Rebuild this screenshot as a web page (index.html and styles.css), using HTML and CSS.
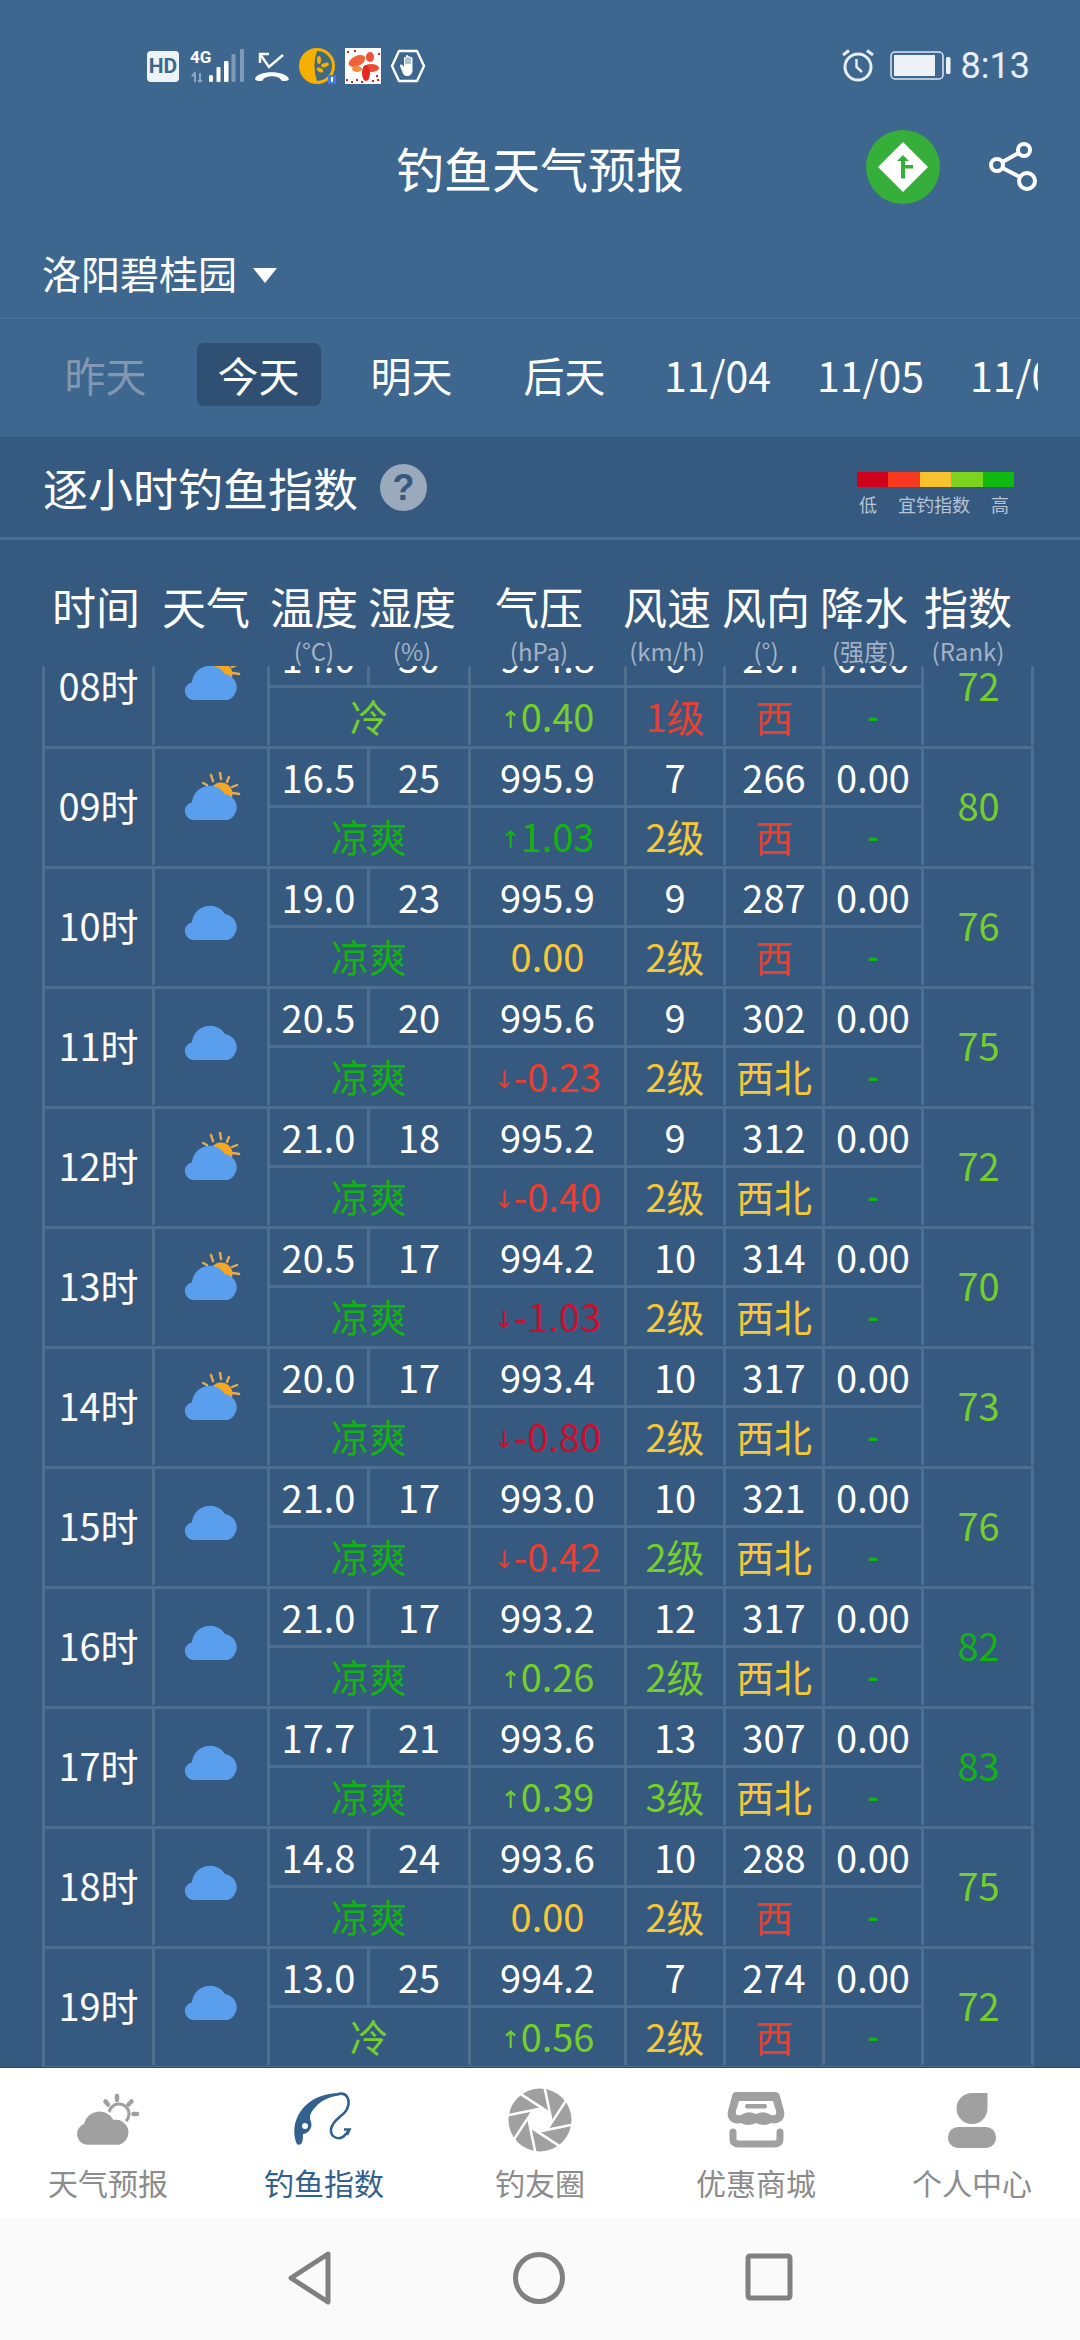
FILE: index.html
```html
<!DOCTYPE html>
<html lang="zh-CN">
<head>
<meta charset="UTF-8"/>
<meta name="viewport" content="width=device-width, initial-scale=1"/>
<title>钓鱼天气预报</title>
<link rel="stylesheet" href="styles.css">
</head>
<body>
<svg class="defs" width="0" height="0" aria-hidden="true">
  <defs>
    <symbol id="cloud" viewBox="0 0 56 48">
      <path fill="#5a9fee" d="M9 48A9 9 0 0 1 7 30.2A18 18 0 0 1 40 22A13.5 13.5 0 0 1 43 48Z"/>
    </symbol>
    <symbol id="cloud-sun" viewBox="0 0 56 48">
      <g stroke="#e3ac52" stroke-width="2.4" stroke-linecap="round">
        <path d="M18 11L22 13M26 3L28 9M35 1L36 7M44 5L42 10M52 13L47 15M54 22L48 21"/>
      </g>
      <circle cx="36" cy="22" r="11.5" fill="#f5a623"/>
      <path fill="#5a9fee" d="M9 48A9 9 0 0 1 7 30.2A18 18 0 0 1 40 22A13.5 13.5 0 0 1 43 48Z"/>
    </symbol>
  </defs>
</svg>

<header class="top">
  <div class="status">
    <div class="status-left">
      <span class="hd">HD</span>
      <svg class="ic-signal" width="55" height="34" viewBox="0 0 55 34">
        <text x="0" y="14" class="four-g">4G</text>
        <path fill="#8ca6c0" d="M4 33V24H6V33ZM1 27L5 22L6 24L3 28ZM9 24H11V31H13L10 34L7 31H9Z"/>
        <rect x="19" y="26" width="4" height="7" rx="1.5" fill="#fff"/>
        <rect x="26.5" y="18" width="4" height="15" rx="1" fill="#fff"/>
        <rect x="34" y="12" width="4.5" height="21" rx="1" fill="#fff"/>
        <rect x="41.5" y="5" width="4" height="28" rx="1" fill="#7f9ab6"/>
        <rect x="50" y="0" width="4" height="33" rx="1" fill="#7f9ab6"/>
      </svg>
      <svg width="36" height="34" viewBox="0 0 36 34">
        <path d="M6 14V5H15M6 5L15 18L29 6" fill="none" stroke="#fff" stroke-width="2.4"/>
        <path fill="#fff" d="M1 30C3 21 32 21 35 30C35 32 28 33 27 31C25 26 11 26 9 31C8 33 1 32 1 30Z"/>
      </svg>
      <svg width="37" height="38" viewBox="0 0 37 38">
        <circle cx="18" cy="19" r="18" fill="#f5b000"/>
        <path fill="#3f6a80" d="M18 4A15 15 0 0 1 18 34Q13 19 18 4Z"/>
        <ellipse cx="20" cy="13" rx="2" ry="4" fill="#f5b000"/>
        <ellipse cx="26" cy="18" rx="4" ry="2" fill="#f5b000" transform="rotate(-20 26 18)"/>
        <ellipse cx="21" cy="23" rx="3.5" ry="2" fill="#f5b000" transform="rotate(30 21 23)"/>
        <rect x="29" y="28" width="8" height="9" fill="#3f7be0"/>
        <rect x="32" y="30" width="2" height="5" fill="#fff"/>
      </svg>
      <svg width="36" height="36" viewBox="0 0 36 36">
        <rect width="36" height="36" fill="#fff"/>
        <ellipse cx="12" cy="13" rx="9" ry="5" fill="#f0623a" transform="rotate(-25 12 13)"/>
        <ellipse cx="25" cy="9" rx="4" ry="5" fill="#f0503a"/>
        <ellipse cx="26" cy="20" rx="8" ry="4" fill="#ee4c32"/>
        <ellipse cx="21" cy="25" rx="4" ry="8" fill="#e32a22"/>
        <ellipse cx="12" cy="21" rx="5" ry="3" fill="#f58a3a"/>
        <path d="M1 31h2v2h-2zM6 33h2v2h-2zM11 31h2v2h-2zM16 33h2v2h-2zM27 32h2v2h-2zM32 31h2v2h-2zM33 5h2v2h-2zM2 3h2v2h-2zM9 2h2v2h-2zM31 27h2v2h-2z" fill="#d8202a"/>
      </svg>
      <svg width="36" height="34" viewBox="0 0 36 34">
        <path d="M9 2H27L34 17L27 32H9L2 17Z" fill="none" stroke="#fff" stroke-width="2.4" stroke-linejoin="round"/>
        <path fill="#fff" d="M10 17C10 15 12 15 14 18V9C14 7.500 16 7.500 16 9V7C16 5.500 18 5.500 18 7V8C18 6.500 20 6.500 20 8V9C20 7.500 22.500 7.500 22.500 9V21C22.500 25 20 27 17 27C14 27 13 25 12 22Z"/>
        <path d="M16 9V15M18 8V15M20 9V15" stroke="#3e678f" stroke-width="0.8"/>
      </svg>
    </div>
    <div class="status-right">
      <svg width="34" height="34" viewBox="0 0 34 34">
        <circle cx="17" cy="18" r="13" fill="none" stroke="#e8eef5" stroke-width="3"/>
        <path d="M15.500 10V18L21 23" fill="none" stroke="#e8eef5" stroke-width="2.400"/>
        <path d="M2 6L8 1.500M32 6L26 1.500" stroke="#e8eef5" stroke-width="3"/>
      </svg>
      <svg class="ic-battery" width="61" height="30" viewBox="0 0 61 30">
        <rect x="1" y="1" width="52" height="27" rx="4" fill="none" stroke="#dfe8f2" stroke-width="1.500"/>
        <rect x="4" y="4" width="41" height="21" fill="#eef2f7"/>
        <rect x="56" y="6" width="4.500" height="17" rx="1.500" fill="#eef2f7"/>
      </svg>
      <span class="clock">8:13</span>
    </div>
  </div>

  <div class="titlebar">
    <span></span>
    <h1>钓鱼天气预报</h1>
    <div class="title-actions">
      <svg width="74" height="74" viewBox="0 0 74 74">
        <circle cx="37" cy="37" r="37" fill="#36ae3a"/>
        <path d="M37 12L62 37L37 62L12 37Z" fill="#fff"/>
        <path d="M37 25L43 31H39V35H47V38.500H39V48.500H35V31H31Z" fill="#36ae3a"/>
      </svg>
      <svg width="54" height="54" viewBox="0 0 54 54">
        <g fill="none" stroke="#fff" stroke-width="4">
          <circle cx="11" cy="25" r="6"/>
          <circle cx="38" cy="10" r="6"/>
          <circle cx="41" cy="41" r="8"/>
          <path d="M16.500 22L32.500 13M16.500 28L34 37"/>
        </g>
      </svg>
    </div>
  </div>

  <div class="location">
    <span>洛阳碧桂园</span>
    <i class="caret"></i>
  </div>

  <nav class="days">
    <div class="day past"><span>昨天</span></div>
    <div class="day active"><span>今天</span></div>
    <div class="day"><span>明天</span></div>
    <div class="day"><span>后天</span></div>
    <div class="day"><span>11/04</span></div>
    <div class="day"><span>11/05</span></div>
    <div class="day"><span>11/06</span></div>
  </nav>
</header>

<section class="section-head">
  <div class="section-title">
    <h2>逐小时钓鱼指数</h2>
    <span class="help">?</span>
  </div>
  <div class="legend">
    <div class="legend-bar"><i></i><i></i><i></i><i></i><i></i></div>
    <div class="legend-text"><span>低</span><span>宜钓指数</span><span>高</span></div>
  </div>
</section>

<div class="thead">
  <div class="th">时间</div>
  <div class="th">天气</div>
  <div class="th">温度<small>(°C)</small></div>
  <div class="th">湿度<small>(%)</small></div>
  <div class="th">气压<small>(hPa)</small></div>
  <div class="th">风速<small>(km/h)</small></div>
  <div class="th">风向<small>(°)</small></div>
  <div class="th">降水<small>(强度)</small></div>
  <div class="th">指数<small>(Rank)</small></div>
</div>

<main class="hours">
  <div class="hours-inner">
    <div class="row">
      <div class="time">08时</div>
      <div class="wx"><svg width="56" height="48"><use href="#cloud-sun"/></svg></div>
      <div class="v">14.0</div><div class="v">30</div><div class="v">994.8</div><div class="v">6</div><div class="v">267</div><div class="v">0.00</div>
      <div class="rank lime">72</div>
      <div class="d feel lime">冷</div><div class="d lime"><i class="arrow">↑</i>0.40</div><div class="d red">1级</div><div class="d red">西</div><div class="d rain">-</div>
    </div>
    <div class="row">
      <div class="time">09时</div>
      <div class="wx"><svg width="56" height="48"><use href="#cloud-sun"/></svg></div>
      <div class="v">16.5</div><div class="v">25</div><div class="v">995.9</div><div class="v">7</div><div class="v">266</div><div class="v">0.00</div>
      <div class="rank lime">80</div>
      <div class="d feel green">凉爽</div><div class="d green"><i class="arrow">↑</i>1.03</div><div class="d yellow">2级</div><div class="d red">西</div><div class="d rain">-</div>
    </div>
    <div class="row">
      <div class="time">10时</div>
      <div class="wx"><svg width="56" height="48"><use href="#cloud"/></svg></div>
      <div class="v">19.0</div><div class="v">23</div><div class="v">995.9</div><div class="v">9</div><div class="v">287</div><div class="v">0.00</div>
      <div class="rank lime">76</div>
      <div class="d feel green">凉爽</div><div class="d yellow">0.00</div><div class="d yellow">2级</div><div class="d red">西</div><div class="d rain">-</div>
    </div>
    <div class="row">
      <div class="time">11时</div>
      <div class="wx"><svg width="56" height="48"><use href="#cloud"/></svg></div>
      <div class="v">20.5</div><div class="v">20</div><div class="v">995.6</div><div class="v">9</div><div class="v">302</div><div class="v">0.00</div>
      <div class="rank lime">75</div>
      <div class="d feel green">凉爽</div><div class="d red"><i class="arrow">↓</i>-0.23</div><div class="d yellow">2级</div><div class="d yellow">西北</div><div class="d rain">-</div>
    </div>
    <div class="row">
      <div class="time">12时</div>
      <div class="wx"><svg width="56" height="48"><use href="#cloud-sun"/></svg></div>
      <div class="v">21.0</div><div class="v">18</div><div class="v">995.2</div><div class="v">9</div><div class="v">312</div><div class="v">0.00</div>
      <div class="rank lime">72</div>
      <div class="d feel green">凉爽</div><div class="d red"><i class="arrow">↓</i>-0.40</div><div class="d yellow">2级</div><div class="d yellow">西北</div><div class="d rain">-</div>
    </div>
    <div class="row">
      <div class="time">13时</div>
      <div class="wx"><svg width="56" height="48"><use href="#cloud-sun"/></svg></div>
      <div class="v">20.5</div><div class="v">17</div><div class="v">994.2</div><div class="v">10</div><div class="v">314</div><div class="v">0.00</div>
      <div class="rank lime">70</div>
      <div class="d feel green">凉爽</div><div class="d crimson"><i class="arrow">↓</i>-1.03</div><div class="d yellow">2级</div><div class="d yellow">西北</div><div class="d rain">-</div>
    </div>
    <div class="row">
      <div class="time">14时</div>
      <div class="wx"><svg width="56" height="48"><use href="#cloud-sun"/></svg></div>
      <div class="v">20.0</div><div class="v">17</div><div class="v">993.4</div><div class="v">10</div><div class="v">317</div><div class="v">0.00</div>
      <div class="rank lime">73</div>
      <div class="d feel green">凉爽</div><div class="d crimson"><i class="arrow">↓</i>-0.80</div><div class="d yellow">2级</div><div class="d yellow">西北</div><div class="d rain">-</div>
    </div>
    <div class="row">
      <div class="time">15时</div>
      <div class="wx"><svg width="56" height="48"><use href="#cloud"/></svg></div>
      <div class="v">21.0</div><div class="v">17</div><div class="v">993.0</div><div class="v">10</div><div class="v">321</div><div class="v">0.00</div>
      <div class="rank lime">76</div>
      <div class="d feel green">凉爽</div><div class="d red"><i class="arrow">↓</i>-0.42</div><div class="d lime">2级</div><div class="d yellow">西北</div><div class="d rain">-</div>
    </div>
    <div class="row">
      <div class="time">16时</div>
      <div class="wx"><svg width="56" height="48"><use href="#cloud"/></svg></div>
      <div class="v">21.0</div><div class="v">17</div><div class="v">993.2</div><div class="v">12</div><div class="v">317</div><div class="v">0.00</div>
      <div class="rank green">82</div>
      <div class="d feel green">凉爽</div><div class="d lime"><i class="arrow">↑</i>0.26</div><div class="d lime">2级</div><div class="d yellow">西北</div><div class="d rain">-</div>
    </div>
    <div class="row">
      <div class="time">17时</div>
      <div class="wx"><svg width="56" height="48"><use href="#cloud"/></svg></div>
      <div class="v">17.7</div><div class="v">21</div><div class="v">993.6</div><div class="v">13</div><div class="v">307</div><div class="v">0.00</div>
      <div class="rank green">83</div>
      <div class="d feel green">凉爽</div><div class="d lime"><i class="arrow">↑</i>0.39</div><div class="d lime">3级</div><div class="d yellow">西北</div><div class="d rain">-</div>
    </div>
    <div class="row">
      <div class="time">18时</div>
      <div class="wx"><svg width="56" height="48"><use href="#cloud"/></svg></div>
      <div class="v">14.8</div><div class="v">24</div><div class="v">993.6</div><div class="v">10</div><div class="v">288</div><div class="v">0.00</div>
      <div class="rank lime">75</div>
      <div class="d feel green">凉爽</div><div class="d yellow">0.00</div><div class="d yellow">2级</div><div class="d red">西</div><div class="d rain">-</div>
    </div>
    <div class="row">
      <div class="time">19时</div>
      <div class="wx"><svg width="56" height="48"><use href="#cloud"/></svg></div>
      <div class="v">13.0</div><div class="v">25</div><div class="v">994.2</div><div class="v">7</div><div class="v">274</div><div class="v">0.00</div>
      <div class="rank lime">72</div>
      <div class="d feel lime">冷</div><div class="d lime"><i class="arrow">↑</i>0.56</div><div class="d yellow">2级</div><div class="d red">西</div><div class="d rain">-</div>
    </div>
  </div>
</main>

<footer class="tabbar">
  <div class="tab">
    <svg width="64" height="54" viewBox="0 0 64 54">
      <g stroke="#a0a0a0" stroke-width="4.500" stroke-linecap="round">
        <path d="M41 3V7M29.500 8.500L32 11.500M55.500 8.500L52.500 11.500M57.500 21H61"/>
      </g>
      <circle cx="43" cy="21" r="10" fill="none" stroke="#a0a0a0" stroke-width="3"/>
      <path fill="#a0a0a0" stroke="#fff" stroke-width="2.500" d="M12 53A12 12 0 0 1 7 30A17 17 0 0 1 38 25.500A14 14 0 0 1 43 53Z"/>
    </svg>
    <span>天气预报</span>
  </div>
  <div class="tab on">
    <svg width="62" height="56" viewBox="0 0 62 56">
      <path fill="#33618f" d="M3 50C-1 38 2 24 12 14C20 6 33 1 46 1V3.500C34 5 26 10 20 18C17 22 16 25 18 30C20 36 15 42 10 42C10 46 10 50 8 52C6 53.500 4 53 3 50Z"/>
      <circle cx="12" cy="34" r="3" fill="#fff"/>
      <path fill="none" stroke="#33618f" stroke-width="2.600" d="M45 2C54 0 58 8 54 17C51 24 40 27 38 37C37 46 47 49 52 43C54 41 55 40 56 38M51 37.500L56.500 37.500L54 43"/>
    </svg>
    <span>钓鱼指数</span>
  </div>
  <div class="tab">
    <svg width="64" height="64" viewBox="-32 -32 64 64">
      <circle r="31.500" fill="#a0a0a0"/>
      <circle r="12" fill="#fff"/>
      <g stroke="#fff" stroke-width="2.500">
        <path d="M12 0L-1.200 -33" transform="rotate(10)"/>
        <path d="M12 0L-1.200 -33" transform="rotate(55)"/>
        <path d="M12 0L-1.200 -33" transform="rotate(100)"/>
        <path d="M12 0L-1.200 -33" transform="rotate(145)"/>
        <path d="M12 0L-1.200 -33" transform="rotate(190)"/>
        <path d="M12 0L-1.200 -33" transform="rotate(235)"/>
        <path d="M12 0L-1.200 -33" transform="rotate(280)"/>
        <path d="M12 0L-1.200 -33" transform="rotate(325)"/>
      </g>
    </svg>
    <span>钓友圈</span>
  </div>
  <div class="tab">
    <svg width="58" height="56" viewBox="0 0 58 56">
      <path fill="#a0a0a0" d="M9 0H48Q52 0 53 4L57 19C59 28 51 33 44 31Q37 35 29 31Q21 35 14 31C6 33 -1 28 1 19L5 4Q6 0 9 0Z"/>
      <path fill="#fff" d="M12 9H46L49 19C50 23 47 24 44 23Q37 18 29 22Q21 18 14 23C11 24 8 23 9 19Z"/>
      <rect x="18" y="12" width="22" height="4.500" rx="2" fill="#a0a0a0"/>
      <path d="M6 40V47Q6 52 12 52H47Q53 52 53 47V40" fill="none" stroke="#a0a0a0" stroke-width="7" stroke-linecap="round"/>
    </svg>
    <span>优惠商城</span>
  </div>
  <div class="tab">
    <svg width="48" height="56" viewBox="0 0 48 56">
      <path fill="#a0a0a0" d="M39.500 1V16.500A15.500 15.500 0 1 1 24 1Z"/>
      <rect x="0" y="35" width="48" height="21" rx="10" fill="#a0a0a0"/>
    </svg>
    <span>个人中心</span>
  </div>
</footer>

<div class="navbar">
  <svg width="48" height="54" viewBox="0 0 48 54">
    <path d="M42 3L5 27L42 51Z" fill="none" stroke="#808080" stroke-width="5" stroke-linejoin="round"/>
  </svg>
  <svg width="54" height="54" viewBox="0 0 54 54">
    <circle cx="27" cy="27" r="23.500" fill="none" stroke="#808080" stroke-width="5"/>
  </svg>
  <svg width="50" height="54" viewBox="0 0 50 54">
    <rect x="4" y="5" width="42" height="42" rx="2" fill="none" stroke="#808080" stroke-width="5"/>
  </svg>
</div>
</body>
</html>
```

FILE: styles.css
```css
/* Base */
* {
  box-sizing: border-box;
}
html, body {
  margin: 0;
  padding: 0;
}
body {
  width: 1080px;
  height: 2340px;
  overflow: hidden;
  display: flex;
  flex-direction: column;
  background: #36597f;
  color: #fff;
  font-family: "Noto Sans CJK SC", "Noto Sans", sans-serif;
}
h1, h2 {
  margin: 0;
  font-weight: 400;
}
.defs {
  position: absolute;
}

/* Top block */
.top {
  flex: 0 0 437px;
  background: #3e678f;
}
.status {
  height: 132px;
  display: flex;
  justify-content: space-between;
  align-items: center;
  padding: 0 50px 0 147px;
}
.status-left, .status-right {
  display: flex;
  align-items: center;
}
.status-left svg {
  margin-left: 9px;
  flex: none;
}
.status-left .ic-signal {
  margin-left: 11px;
}
.hd {
  width: 32px;
  height: 31px;
  background: #eef3f8;
  border-radius: 4px;
  color: #3e678f;
  font: 700 21px/31px "Roboto", sans-serif;
  text-align: center;
}
.four-g {
  fill: #fff;
  font: 700 17px "Roboto", sans-serif;
}
.ic-battery {
  margin-left: 15px;
}
.clock {
  margin-left: 10px;
  font: 400 36px/1 "Roboto", sans-serif;
  color: #e8eef5;
}
.titlebar {
  height: 70px;
  display: grid;
  grid-template-columns: 1fr auto 1fr;
  grid-template-rows: 70px;
  align-items: center;
  padding-right: 40px;
}
.titlebar h1 {
  font-size: 48px;
  line-height: 70px;
  padding-left: 40px;
}
.title-actions {
  display: flex;
  justify-content: flex-end;
  align-items: center;
  gap: 46px;
}
.location {
  height: 117px;
  padding: 24px 0 0 42px;
  display: flex;
  align-items: center;
  font-size: 39px;
  border-bottom: 1px solid #4a7199;
}
.caret {
  margin: 6px 0 0 16px;
  border-style: solid;
  border-width: 15px 12px 0 12px;
  border-color: #fff transparent transparent transparent;
}
.days {
  display: flex;
  margin: 0 42px 0 29px;
  padding-top: 24px;
  overflow: hidden;
}
.day {
  flex: 0 0 153px;
  display: flex;
  justify-content: center;
  font-size: 41px;
}
.day span {
  height: 63px;
  line-height: 63px;
  padding: 0 21px;
  border-radius: 7px;
}
.day.past {
  color: #8398b0;
}
.day.active span {
  background: #2f5072;
}

/* Section title and legend */
.section-head {
  flex: 0 0 103px;
  display: flex;
  justify-content: space-between;
  align-items: center;
  padding: 0 66px 0 43px;
  border-bottom: 3px solid #4b6d91;
}
.section-title {
  display: flex;
  align-items: center;
  gap: 22px;
}
.section-title h2 {
  font-size: 45px;
}
.help {
  width: 47px;
  height: 47px;
  border-radius: 50%;
  background: #9aa9bb;
  color: #36597f;
  font: 700 36px/47px "Liberation Sans", sans-serif;
  text-align: center;
}
.legend {
  width: 157px;
  margin-top: 18px;
}
.legend-bar {
  display: flex;
  height: 15px;
}
.legend-bar i {
  flex: 1;
}
.legend-bar i:nth-child(1) { background: #d0021b; }
.legend-bar i:nth-child(2) { background: #f8391f; }
.legend-bar i:nth-child(3) { background: #f8c22d; }
.legend-bar i:nth-child(4) { background: #7ed321; }
.legend-bar i:nth-child(5) { background: #12b812; }
.legend-text {
  display: flex;
  justify-content: space-between;
  padding: 0 5px 0 2px;
  font-size: 18px;
  line-height: 34px;
  color: #b7c4d3;
}

/* Table head */
.thead {
  flex: 0 0 126px;
  display: grid;
  grid-template-columns: 104px 116px 100px 96px 158px 98px 100px 96px 112px;
  padding: 45px 0 0 44px;
}
.th {
  display: flex;
  flex-direction: column;
  align-items: center;
  font-size: 44px;
  line-height: 42px;
  white-space: nowrap;
}
.th small {
  margin-top: 10px;
  font-size: 24px;
  line-height: 28px;
  color: #a4b3c5;
}

/* Hour rows */
.hours {
  flex: 1;
  min-height: 0;
  overflow: hidden;
}
.hours-inner {
  margin-top: -37px;
}
.row {
  height: 120px;
  margin-left: 42px;
  width: 992px;
  display: grid;
  grid-template-columns: 110px 115px 100px 101px 156px 99px 99px 99px 110px;
  grid-template-rows: 59px 57px;
  padding-bottom: 1px;
  border-left: 3px solid #4f6f91;
  border-bottom: 3px solid #4f6f91;
}
.row > div {
  display: flex;
  justify-content: center;
  align-items: center;
  font-size: 38px;
  border-right: 3px solid #4f6f91;
  white-space: nowrap;
}
.row .time { grid-area: 1 / 1 / 3 / 2; padding-bottom: 5px; }
.row .wx { grid-area: 1 / 2 / 3 / 3; }
.row .rank { grid-area: 1 / 9 / 3 / 10; padding: 0 0 5px 2px; }
.row .wx {
  align-items: flex-start;
  padding: 23px 0 0 4px;
}
.row .v {
  grid-row: 1;
  border-bottom: 3px solid #4f6f91;
  padding-bottom: 2px;
}
.row .d {
  grid-row: 2;
  padding-bottom: 3px;
}
.row .feel {
  grid-column: 3 / 5;
}
.row .rain {
  color: #12b312;
  font-size: 30px;
  font-weight: 700;
}
.arrow {
  font: 400 24px/1 "DejaVu Sans", sans-serif;
  align-self: flex-end;
  margin: 0 0 10px 0;
}

/* Value colours */
.lime { color: #74cf2c; }
.green { color: #12b312; }
.yellow { color: #f5c83c; }
.red { color: #e8402e; }
.crimson { color: #c8102e; }

/* Bottom tabs */
.tabbar {
  flex: 0 0 151px;
  display: flex;
  background: #fff;
  border-top: 1px solid #2b4763;
}
.tab {
  flex: 1;
  display: flex;
  flex-direction: column;
  align-items: center;
  color: #8c8c8c;
  font-size: 30px;
  line-height: 42px;
}
.tab svg {
  height: 64px;
  margin-top: 20px;
  flex: none;
}
.tab span {
  margin-top: 9px;
}
.tab.on {
  color: #33618f;
}
.navbar {
  flex: 0 0 122px;
  display: flex;
  justify-content: center;
  align-items: flex-start;
  gap: 178px;
  padding-top: 33px;
  background: #fafafa;
}
```
